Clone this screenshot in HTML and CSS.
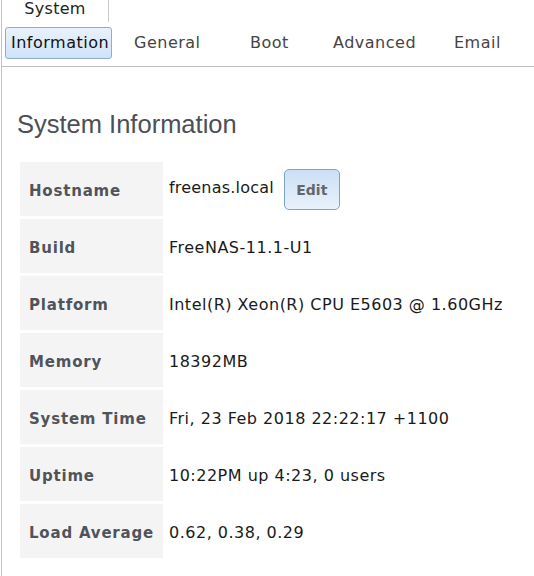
FILE: index.html
```html
<!DOCTYPE html>
<html>
<head>
<meta charset="utf-8">
<link rel="stylesheet" href="styles.css">
</head>
<body>
<div class="page">
  <div class="toptabs">
    <div class="toptab">System</div>
  </div>
  <div class="subtabs">
    <span class="subtab active">Information</span>
    <span class="subtab t-general">General</span>
    <span class="subtab t-boot">Boot</span>
    <span class="subtab t-adv">Advanced</span>
    <span class="subtab t-email">Email</span>
  </div>
  <div class="content">
    <h1 class="title">System Information</h1>
    <table class="info">
      <tr><th>Hostname</th><td><span class="host">freenas.local</span><button class="edit">Edit</button></td></tr>
      <tr><th>Build</th><td>FreeNAS-11.1-U1</td></tr>
      <tr><th>Platform</th><td>Intel(R) Xeon(R) CPU E5603 @ 1.60GHz</td></tr>
      <tr><th>Memory</th><td>18392MB</td></tr>
      <tr><th>System Time</th><td>Fri, 23 Feb 2018 22:22:17 +1100</td></tr>
      <tr><th>Uptime</th><td>10:22PM up 4:23, 0 users</td></tr>
      <tr><th>Load Average</th><td>0.62, 0.38, 0.29</td></tr>
    </table>
  </div>
</div>
</body>
</html>
```

FILE: styles.css
```css
html, body {
  margin: 0;
  padding: 0;
  background: #fff;
}
.page {
  margin-left: 1px;
  border-left: 1px solid #c4c4c8;
  min-height: 576px;
  font-family: "DejaVu Sans", Verdana, sans-serif;
}
.toptabs {
  display: flex;
  height: 22px;
}
.toptab {
  width: 107px;
  border-right: 1px solid #c8c8c8;
  font-size: 16px;
  letter-spacing: 0.3px;
  color: #222;
  text-align: center;
  line-height: 16px;
  padding-top: 1px;
  height: 22px;
  box-sizing: border-box;
}
.subtabs {
  border-bottom: 1px solid #bdbdbd;
  display: flex;
  align-items: flex-start;
  padding-top: 5px;
  box-sizing: border-box;
  height: 45px;
}
.subtab {
  font-size: 16px;
  letter-spacing: 0.5px;
  color: #444;
  line-height: 31px;
  height: 32px;
  display: inline-block;
  box-sizing: border-box;
}
.subtab.active {
  margin-left: 3px;
  width: 107px;
  padding-left: 5px;
  line-height: 30px;
  border: 1px solid #8daed0;
  border-radius: 3px;
  background: linear-gradient(#e9f2fc, #cfe3f8);
  color: #111;
}
.t-general { margin-left: 22px; width: 116px; }
.t-boot { width: 83px; }
.t-adv { width: 121px; }
.t-email { width: 70px; }
.content {
  padding: 0 0 0 15px;
}
.title {
  margin: 0;
  padding-top: 42px;
  font-family: "Liberation Sans", Arial, sans-serif;
  font-weight: normal;
  font-size: 25.5px;
  line-height: 30px;
  color: #4b5056;
}
.info {
  border-collapse: separate;
  border-spacing: 3px;
  margin-top: 20px;
  margin-left: 0;
}
.info th {
  background: #f4f4f4;
  width: 143px;
  height: 54px;
  padding: 3px 0 0 9px;
  text-align: left;
  font-family: "DejaVu Sans", Verdana, sans-serif;
  font-weight: bold;
  font-size: 15px;
  letter-spacing: 0.8px;
  color: #50545a;
  box-sizing: border-box;
}
.info td {
  padding: 3px 0 0 3px;
  font-size: 16px;
  letter-spacing: 0.5px;
  color: #1a1a1a;
  white-space: nowrap;
  box-sizing: border-box;
}
.host {
  letter-spacing: 0.2px;
  vertical-align: middle;
  position: relative;
  top: -3px;
}
.edit {
  margin-left: 10px;
  width: 56px;
  height: 41px;
  border: 1px solid #7ea3c9;
  border-radius: 5px;
  background: linear-gradient(#cbdff5, #eaf2fb);
  font-family: "DejaVu Sans", Verdana, sans-serif;
  font-weight: bold;
  font-size: 14px;
  color: #666;
  vertical-align: middle;
  padding: 0;
  position: relative;
  top: -1px;
}
```
